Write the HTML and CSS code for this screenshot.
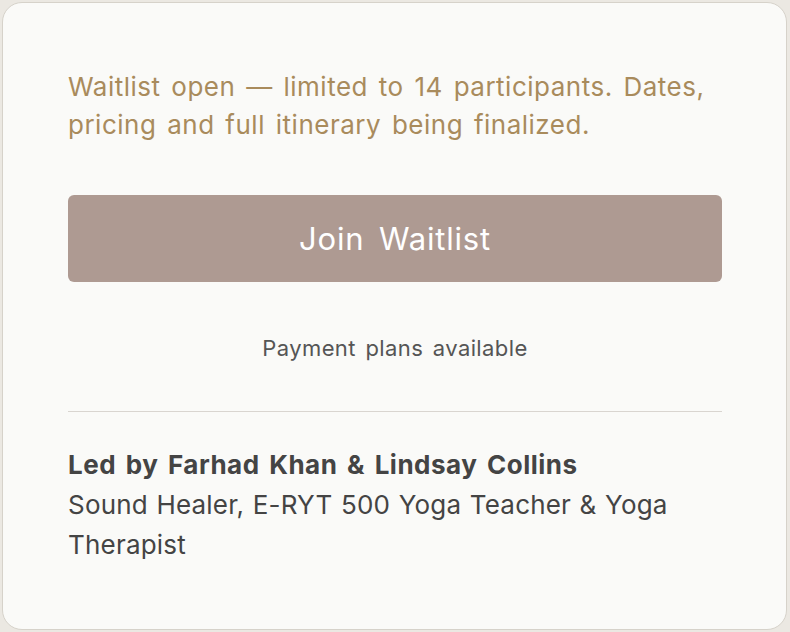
FILE: index.html
```html
<!DOCTYPE html>
<html lang="en">
<head>
<meta charset="utf-8">
<title>Waitlist</title>
<link rel="stylesheet" href="styles.css">
</head>
<body>
<div class="card">
  <p class="notice">Waitlist open — limited to 14 participants. Dates, pricing and full itinerary being finalized.</p>
  <button class="cta" type="button">Join Waitlist</button>
  <p class="note">Payment plans available</p>
  <hr class="divider">
  <div class="leaders">
    <p class="leaders-name">Led by Farhad Khan &amp; Lindsay Collins</p>
    <p class="leaders-bio">Sound Healer, E-RYT 500 Yoga Teacher &amp; Yoga Therapist</p>
  </div>
</div>
</body>
</html>
```

FILE: styles.css
```css
html, body {
  margin: 0;
  padding: 0;
}
body {
  background: #ebe8e2;
  width: 790px;
  height: 632px;
  overflow: hidden;
  font-family: Inter, "Open Sans", sans-serif;
}
.card {
  box-sizing: border-box;
  margin: 2px 0 0 2px;
  width: 785px;
  height: 628px;
  background: #fafaf8;
  border: 1px solid #d6d2ca;
  border-radius: 20px;
  padding: 65px 64px 0 65px;
  display: flex;
  flex-direction: column;
}
.notice {
  margin: 0;
  color: #a98b5c;
  font-size: 26px;
  letter-spacing: 0.5px;
  word-spacing: 3px;
  line-height: 38px;
}
.cta {
  margin-top: 51px;
  height: 87px;
  width: 100%;
  border: 0;
  border-radius: 6px;
  background: #ae9a92;
  color: #fff;
  font-family: inherit;
  font-size: 31px;
  letter-spacing: 0.8px;
  word-spacing: 5px;
}
.note {
  margin: 51px 0 0;
  text-align: center;
  color: #555;
  font-size: 22px;
  letter-spacing: 0.4px;
  word-spacing: 3px;
  line-height: 30px;
}
.divider {
  margin: 48px 0 0;
  border: 0;
  height: 1px;
  background: #d9d5d0;
}
.leaders {
  margin-top: 33px;
  color: #444;
}
.leaders-name {
  margin: 0;
  font-weight: 700;
  font-size: 26px;
  letter-spacing: 0.5px;
  word-spacing: 3px;
  line-height: 40px;
}
.leaders-bio {
  margin: 0;
  font-size: 26px;
  letter-spacing: 0.2px;
  word-spacing: 1px;
  line-height: 40px;
}
```
